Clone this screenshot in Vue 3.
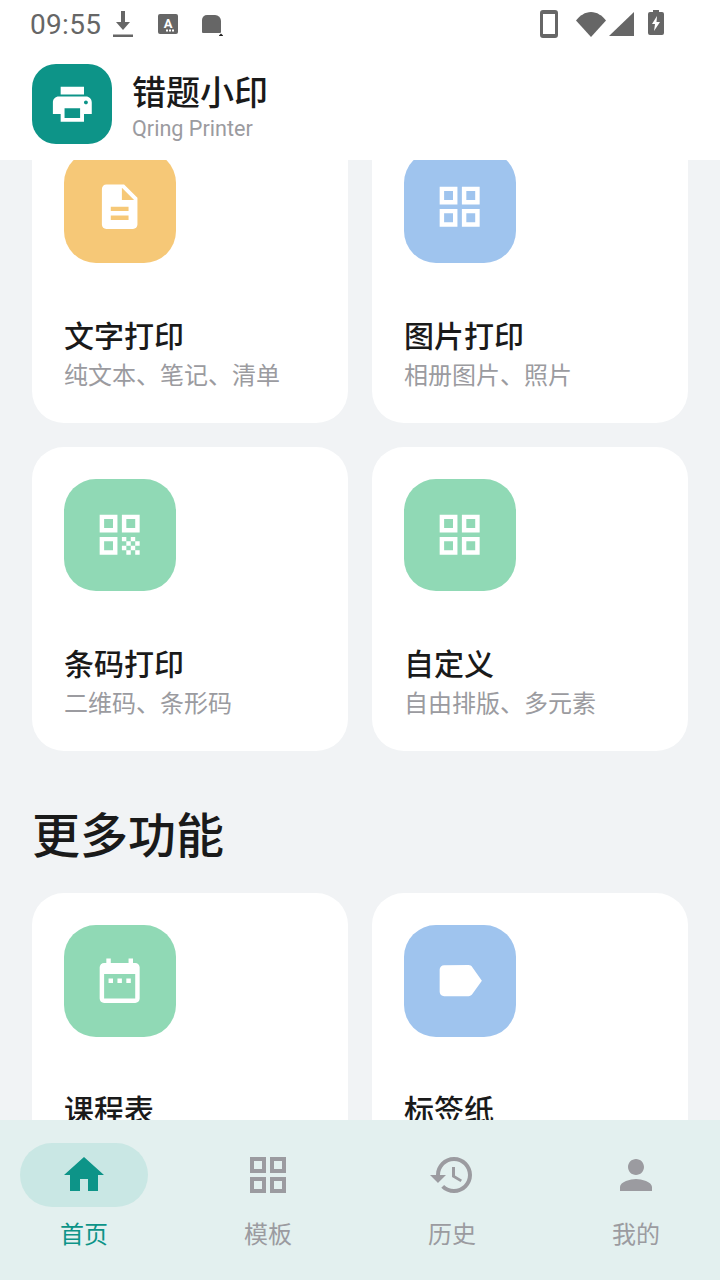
<script setup>
const paths = {
  doc: 'M14 2H6c-1.1 0-1.99.9-1.99 2L4 20c0 1.1.89 2 1.99 2H18c1.1 0 2-.9 2-2V8l-6-6zm2 16H8v-2h8v2zm0-4H8v-2h8v2zm-3-5V3.5L18.5 9H13z',
  grid: 'M3 3v8h8V3H3zm6 6H5V5h4v4zm-6 4v8h8v-8H3zm6 6H5v-4h4v4zm4-16v8h8V3h-8zm6 6h-4V5h4v4zm-6 4v8h8v-8h-8zm6 6h-4v-4h4v4z',
  qr: 'M3 11h8V3H3v8zm2-6h4v4H5V5zM3 21h8v-8H3v8zm2-6h4v4H5v-4zM13 3v8h8V3h-8zm6 6h-4V5h4v4zM13 13h2v2h-2zM15 15h2v2h-2zM13 17h2v2h-2zM17 17h2v2h-2zM19 19h2v2h-2zM15 19h2v2h-2zM17 13h2v2h-2zM19 15h2v2h-2z',
  cal: 'M9 11H7v2h2v-2zm4 0h-2v2h2v-2zm4 0h-2v2h2v-2zm2-7h-1V2h-2v2H8V2H6v2H5c-1.11 0-1.99.9-1.99 2L3 20c0 1.1.89 2 2 2h14c1.1 0 2-.9 2-2V6c0-1.1-.9-2-2-2zm0 16H5V9h14v11z',
  label: 'M17.63 5.84C17.27 5.33 16.67 5 16 5L5 5.01C3.9 5.01 3 5.9 3 7v10c0 1.1.9 1.99 2 1.99L16 19c.67 0 1.27-.33 1.63-.84L22 12l-4.37-6.16z',
  home: 'M10 20v-6h4v6h5v-8h3L12 3 2 12h3v8z',
  history: 'M13 3c-4.97 0-9 4.03-9 9H1l3.89 3.89.07.14L9 12H6c0-3.87 3.13-7 7-7s7 3.13 7 7-3.13 7-7 7c-1.93 0-3.68-.79-4.94-2.06l-1.42 1.42C8.27 19.99 10.51 21 13 21c4.97 0 9-4.03 9-9s-4.03-9-9-9zm-1 5v5l4.28 2.54.72-1.21-3.5-2.08V8H12z',
  person: 'M12 12c2.21 0 4-1.79 4-4s-1.79-4-4-4-4 1.79-4 4 1.79 4 4 4zm0 2c-2.67 0-8 1.34-8 4v2h16v-2c0-2.66-5.33-4-8-4z',
  printer: 'M19 8H5c-1.66 0-3 1.34-3 3v6h4v4h12v-4h4v-6c0-1.66-1.34-3-3-3zm-3 11H8v-5h8v5zm3-7c-.55 0-1-.45-1-1s.45-1 1-1 1 .45 1 1-.45 1-1 1zm-1-9H6v4h12V3z'
}
const printCards = [
  { title: '文字打印', sub: '纯文本、笔记、清单', icon: 'doc', tone: 'yellow' },
  { title: '图片打印', sub: '相册图片、照片', icon: 'grid', tone: 'blue' },
  { title: '条码打印', sub: '二维码、条形码', icon: 'qr', tone: 'green' },
  { title: '自定义', sub: '自由排版、多元素', icon: 'grid', tone: 'green' }
]
const moreCards = [
  { title: '课程表', sub: '每周课程安排', icon: 'cal', tone: 'green' },
  { title: '标签纸', sub: '标签、贴纸打印', icon: 'label', tone: 'blue' }
]
const tabs = [
  { label: '首页', icon: 'home', active: true },
  { label: '模板', icon: 'grid' },
  { label: '历史', icon: 'history' },
  { label: '我的', icon: 'person' }
]
</script>

<template>
  <div class="phone">
    <div class="status">
      <span class="time">09:55</span>
      <svg class="st st-dl" viewBox="0 0 20 26"><path d="M8 0h4v11h5l-7 8-7-8h5zM0 23.500h20V26H0z" /></svg>
      <svg class="st st-a" viewBox="0 0 20 20">
        <rect width="20" height="20" rx="2" />
        <text x="10" y="13.500" text-anchor="middle" class="st-a-text">A</text>
        <path class="st-cut" d="M11 15.500h2v2h-2zM14 15.500h2v2h-2zM8 15.500h2v2H8z" />
      </svg>
      <svg class="st st-blob" viewBox="0 0 24 24">
        <path d="M6 2h8a6 6 0 0 1 6 6v11a1 1 0 0 1-1 1H2a1 1 0 0 1-1-1V7a5 5 0 0 1 5-5z" />
        <path class="st-black" d="M20 20.500l2 2v.5h-4v-.5z" />
      </svg>
      <span class="st-spacer"></span>
      <svg class="st st-phone" viewBox="0 0 18 28"><path fill-rule="evenodd" d="M3 0h12a3 3 0 0 1 3 3v22a3 3 0 0 1-3 3H3a3 3 0 0 1-3-3V3a3 3 0 0 1 3-3zm0 4v20h12V4z" /></svg>
      <svg class="st st-wifi" viewBox="0 0 30 25"><path d="M0 8.500C4 3.500 9 0 15 0s11 3.500 15 8.500L15 25z" /></svg>
      <svg class="st st-signal" viewBox="0 0 25 24"><path d="M25 0v24H0z" /></svg>
      <svg class="st st-batt" viewBox="0 0 16 25"><path fill-rule="evenodd" d="M5 0h6v2h3a2 2 0 0 1 2 2v19a2 2 0 0 1-2 2H2a2 2 0 0 1-2-2V4a2 2 0 0 1 2-2h3zM9 6L4 14h3l-1 7 6-9H8.500z" /></svg>
    </div>

    <header class="head">
      <div class="logo">
        <svg width="46.670" height="46.670" viewBox="0 0 24 24"><path :d="paths.printer" /></svg>
      </div>
      <div class="brand">
        <div class="brand-name">错题小印</div>
        <div class="brand-sub">Qring Printer</div>
      </div>
    </header>

    <main class="scroll">
      <div class="content">
        <section class="grid">
          <article v-for="c in printCards" :key="c.title" class="card">
            <div class="tile" :class="c.tone">
              <svg width="53.330" height="53.330" viewBox="0 0 24 24"><path :d="paths[c.icon]" /></svg>
            </div>
            <div class="card-title">{{ c.title }}</div>
            <div class="card-sub">{{ c.sub }}</div>
          </article>
        </section>
        <h2 class="section">更多功能</h2>
        <section class="grid">
          <article v-for="c in moreCards" :key="c.title" class="card">
            <div class="tile" :class="c.tone">
              <svg width="53.330" height="53.330" viewBox="0 0 24 24"><path :d="paths[c.icon]" /></svg>
            </div>
            <div class="card-title">{{ c.title }}</div>
            <div class="card-sub">{{ c.sub }}</div>
          </article>
        </section>
      </div>
    </main>

    <nav class="tabs">
      <div v-for="t in tabs" :key="t.label" class="tab" :class="{ on: t.active }">
        <div class="pill">
          <svg width="48" height="48" viewBox="0 0 24 24"><path :d="paths[t.icon]" /></svg>
        </div>
        <div class="tab-label">{{ t.label }}</div>
      </div>
    </nav>
  </div>
</template>

<style>
html, body { margin: 0; padding: 0; }
</style>

<style scoped>
.phone {
  width: 720px;
  height: 1280px;
  display: flex;
  flex-direction: column;
  overflow: hidden;
  background: #f1f3f5;
  font-family: Roboto, "Noto Sans CJK SC", sans-serif;
}
.status {
  height: 48px;
  flex: none;
  display: flex;
  align-items: center;
  padding-left: 30px;
  background: #fff;
  color: #666;
}
.time { font-size: 28px; font-weight: 400; width: 71px; letter-spacing: 0.3px; }
.st { display: block; fill: #666; flex: none; }
.st-dl { width: 20px; height: 26px; margin-left: 12px; }
.st-a { width: 20px; height: 20px; margin-left: 25px; }
.st-a-text { font: 700 13px Roboto, sans-serif; fill: #fff; }
.st-cut { fill: #fff; }
.st-blob { width: 24px; height: 24px; margin-left: 23px; margin-top: 2px; }
.st-black { fill: #222; }
.st-spacer { flex: 1; }
.st-phone { width: 18px; height: 28px; margin-right: 18px; }
.st-wifi { width: 30px; height: 25px; margin-right: 3px; }
.st-signal { width: 25px; height: 24px; margin-right: 14px; }
.st-batt { width: 16px; height: 25px; margin-right: 56px; margin-top: -4px; }

.head {
  height: 112px;
  flex: none;
  box-sizing: border-box;
  display: flex;
  align-items: center;
  gap: 20px;
  padding: 0 32px;
  background: #fff;
  position: relative;
  z-index: 1;
}
.logo {
  width: 80px;
  height: 80px;
  border-radius: 24px;
  background: #0d9488;
  display: flex;
  align-items: center;
  justify-content: center;
}
.logo svg { fill: #fff; }
.brand { padding-top: 5px; }
.brand-name { font-size: 34px; font-weight: 500; line-height: 44px; color: #1a1a1a; }
.brand-sub { font-size: 21.600px; line-height: 28px; color: #9b9ba0; }

.scroll { flex: 1; min-height: 0; overflow: hidden; }
.content { margin-top: -41px; padding: 0 32px; }
.grid { display: grid; grid-template-columns: 1fr 1fr; gap: 24px; }
.card {
  height: 304px;
  box-sizing: border-box;
  padding: 32px;
  background: #fff;
  border-radius: 32px;
}
.tile {
  width: 112px;
  height: 112px;
  border-radius: 32px;
  display: flex;
  align-items: center;
  justify-content: center;
}
.tile svg { fill: #fff; }
.yellow { background: #f6c877; }
.blue { background: #9fc4ee; }
.green { background: #90d9b5; }
.card-title { margin-top: 54px; font-size: 30px; font-weight: 500; line-height: 40px; color: #1a1a1a; }
.card-sub { margin-top: 1px; font-size: 24px; line-height: 36px; color: #9b9ba0; }
.section {
  margin: 0;
  height: 142px;
  box-sizing: border-box;
  padding: 51px 0 0;
  font-size: 48px;
  line-height: 70px;
  font-weight: 500;
  color: #1a1a1a;
}

.tabs {
  height: 160px;
  flex: none;
  box-sizing: border-box;
  display: flex;
  justify-content: space-between;
  padding: 23px 20px 0;
  background: #e3f0ef;
  position: relative;
  z-index: 1;
}
.tab { width: 128px; display: flex; flex-direction: column; align-items: center; color: #9b9ba0; }
.pill {
  width: 128px;
  height: 64px;
  border-radius: 32px;
  display: flex;
  align-items: center;
  justify-content: center;
}
.pill svg { fill: #9b9ba0; }
.tab.on { color: #0d9488; }
.tab.on .pill { background: #c9e7e4; }
.tab.on .pill svg { fill: #0d9488; }
.tab-label { margin-top: 11px; font-size: 24px; line-height: 34px; }
</style>
